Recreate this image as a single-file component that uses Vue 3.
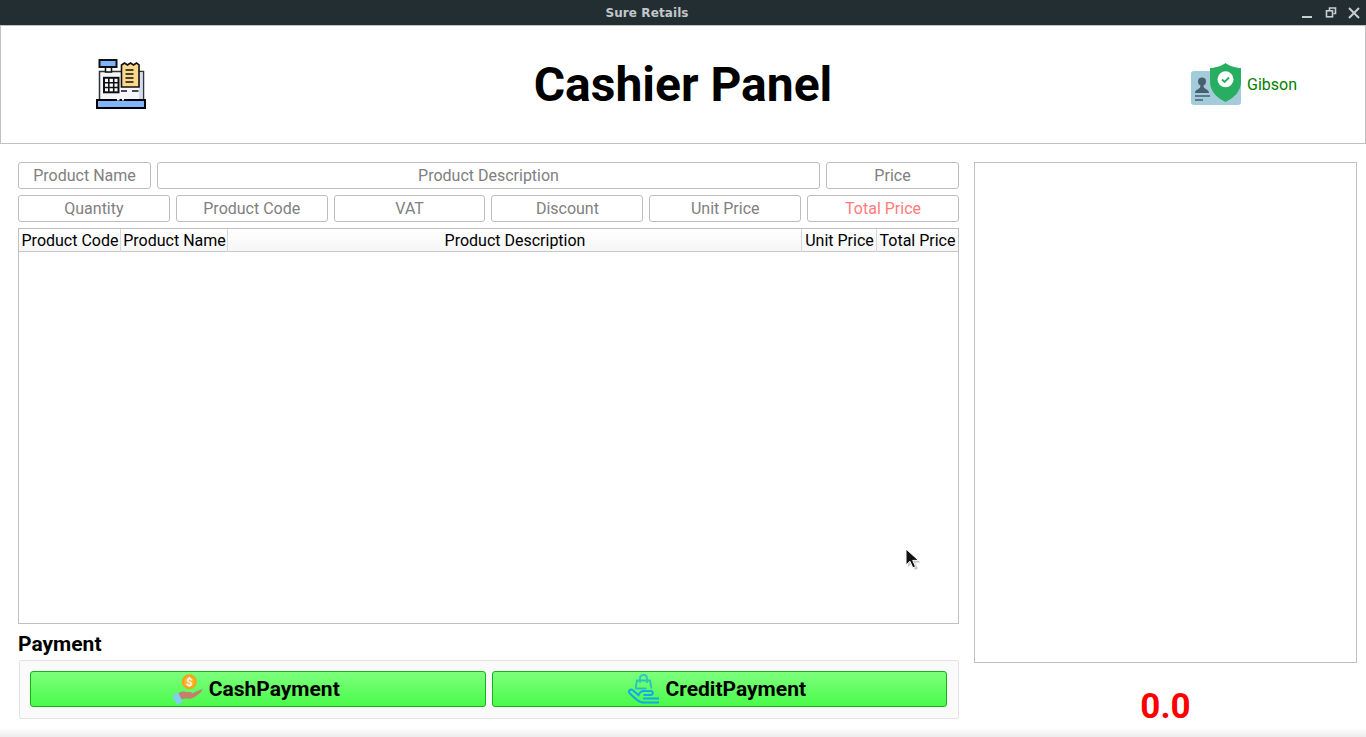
<script setup>
const topFields = ['Product Name', 'Product Description', 'Price']
const bottomFields = ['Quantity', 'Product Code', 'VAT', 'Discount', 'Unit Price', 'Total Price']
const columns = ['Product Code', 'Product Name', 'Product Description', 'Unit Price', 'Total Price']
</script>

<template>
  <div class="window">
    <div class="titlebar">
      <span class="title">Sure Retails</span>
      <div class="controls">
        <svg width="12" height="12" viewBox="0 0 12 12"><path d="M0 10h10" stroke="#c9cdcf" stroke-width="2" /></svg>
        <svg width="12" height="12" viewBox="0 0 12 12" fill="none" stroke="#c9cdcf" stroke-width="1.6"><path d="M4.5 3V1h6v5.500H8.500" /><rect x="1.500" y="3.800" width="6" height="6" /></svg>
        <svg width="12" height="12" viewBox="0 0 12 12"><path d="M1 1l10 10M11 1L1 11" stroke="#c9cdcf" stroke-width="2" /></svg>
      </div>
    </div>

    <header class="header">
      <div class="logo">
        <svg width="50" height="50" viewBox="0 0 50 50">
          <rect x="3.500" y="12.500" width="44" height="29" fill="#f4f6fc" stroke="#333" stroke-width="1.500" />
          <rect x="43" y="13" width="3.500" height="28" fill="#d3dcf0" />
          <rect x="9.500" y="8" width="6" height="5" fill="#fff" stroke="#111" stroke-width="1.500" />
          <rect x="3.500" y="1" width="17" height="7" fill="#80b4fb" stroke="#111" stroke-width="2" />
          <rect x="8" y="18.800" width="14.500" height="14.500" fill="#fff" stroke="#111" stroke-width="2" />
          <path d="M8 23.700h14.500M8 28.500h14.500M12.800 19v14M17.700 19v14" stroke="#111" stroke-width="1.600" />
          <path d="M25.500 28V6l3-2 3 2 3-2 3 2 3-2 2.500 2v22z" fill="#fcd98a" stroke="#111" stroke-width="1.600" />
          <path d="M29.500 11h8M29.500 15h8M29.500 19h8M29.500 23h8" stroke="#111" stroke-width="1.500" />
          <path d="M25 32h6M36 32h6.500" stroke="#111" stroke-width="1.600" />
          <rect x="1" y="41" width="48" height="8" fill="#80b4fb" stroke="#000" stroke-width="2" />
          <path d="M21 40.500h2.500M26 40.500h2" stroke="#fff" stroke-width="2" />
        </svg>
      </div>
      <h1>Cashier Panel</h1>
      <div class="user">
        <svg width="50" height="42" viewBox="0 0 50 42">
          <rect x="0" y="8" width="50" height="34" rx="3" fill="#a4cbd9" />
          <circle cx="11" cy="18.500" r="4" fill="#46606f" />
          <path d="M11 21c1 0 1.800 1 1.800 3 .2 2 5.200 2.500 5.200 6H4c0-3.500 5-4 5.200-6 0-2 .8-3 1.800-3z" fill="#46606f" />
          <path d="M4 33h15M4 37h8" stroke="#46606f" stroke-width="1.400" />
          <path d="M34.500 0c3 2.500 10 5 15.500 5v14c0 9-7 16-15.500 20C26 35 19 28 19 19V5c5.500 0 12.500-2.500 15.500-5z" fill="#27ae60" />
          <circle cx="34.500" cy="16.300" r="8" fill="#fff" />
          <path d="M31 16.500l2.600 2.500 4.400-4.500" fill="none" stroke="#27ae60" stroke-width="1.800" />
        </svg>
        <span class="username">Gibson</span>
      </div>
    </header>

    <main class="content">
      <section class="left">
        <div class="field-row top">
          <input v-for="f in topFields" :key="f" class="field" :placeholder="f" />
        </div>
        <div class="field-row">
          <input
            v-for="f in bottomFields"
            :key="f"
            class="field"
            :class="{ total: f === 'Total Price' }"
            :placeholder="f"
          />
        </div>

        <div class="table">
          <div class="table-head">
            <div v-for="c in columns" :key="c" class="th">{{ c }}</div>
          </div>
        </div>

        <h2 class="payment-label">Payment</h2>
        <div class="payment-box">
          <button class="pay">
            <svg width="32" height="32" viewBox="0 0 32 32">
              <circle cx="17.300" cy="8.700" r="7.500" fill="#f7a21b" />
              <circle cx="17.300" cy="8.700" r="5.300" fill="#fbb62e" />
              <path d="M6 20.500c3-2.500 6-2.500 9-1.500h4c1 0 1 1.500 0 2l5-2.500c2-1 6-2.500 7-2-2 3-6 6-9 8-3 1.500-6 1.500-8 1l-6 1z" fill="#c47f6d" />
              <path d="M0 22.500l6-3 5 9.500-6 3z" fill="#7ed0ee" />
              <text x="17.300" y="12.500" class="dollar">$</text>
            </svg>
            CashPayment
          </button>
          <button class="pay">
            <svg width="32" height="32" viewBox="0 0 32 32" fill="none">
              <path d="M7.500 15.500l1.500-8h13l1.500 8" stroke="#23c4c4" stroke-width="1.800" />
              <path d="M7.500 15.500h11" stroke="#1fbbd0" stroke-width="1.800" />
              <path d="M12 10V5c0-4 7-4 7 0v5" stroke="#2cc7c0" stroke-width="1.800" />
              <path d="M31 29.500H15c-4 0-7-3-11-7L1.500 20c-1.500-2 1-4.500 3-3l6 5c1.500-3.500 3.500-4.500 6-4h6c3 0 3 4 0 4h-7" stroke="#10a8ee" stroke-width="2" />
              <path d="M15 25.500h16" stroke="#10a8ee" stroke-width="2" />
            </svg>
            CreditPayment
          </button>
        </div>
      </section>

      <aside class="right">
        <div class="preview"></div>
        <div class="amount">0.0</div>
      </aside>
    </main>

    <div class="bottom-edge"></div>

    <svg class="cursor" width="16" height="24" viewBox="0 0 16 24">
      <path d="M3 3v16l4-3.500 3 6.500 3-1.500-3-6h5.500z" fill="#9a9a9a" opacity="0.55" />
      <path d="M1 1v16l4-3.700 2.800 6.500 2.700-1.200-2.800-6.200H13.500z" fill="#111" stroke="#fff" stroke-width="1" />
    </svg>
  </div>
</template>

<style>
html, body {
  margin: 0;
  background: #fff;
}
</style>

<style scoped>
.window {
  position: relative;
  width: 1366px;
  height: 737px;
  overflow: hidden;
  background: #fff;
  font-family: Roboto, sans-serif;
  display: flex;
  flex-direction: column;
}

.titlebar {
  position: relative;
  height: 25px;
  flex: none;
  box-sizing: border-box;
  padding-right: 72px;
  background: #232e33;
  display: flex;
  align-items: center;
  justify-content: center;
}

.title {
  font-family: "DejaVu Sans", sans-serif;
  font-size: 12px;
  font-weight: bold;
  letter-spacing: 0.1px;
  color: #c3c7c9;
}

.controls {
  position: absolute;
  right: 6px;
  top: 7px;
  display: flex;
  gap: 11px;
}

.header {
  height: 119px;
  flex: none;
  box-sizing: border-box;
  border: 1px solid #c0c0c0;
  display: grid;
  grid-template-columns: 1fr auto 1fr;
  align-items: center;
}

.logo {
  padding-left: 95px;
  display: flex;
}

.logo svg,
.user svg {
  margin-bottom: 2px;
}

h1 {
  margin: 0;
  font-size: 48px;
  font-weight: 700;
  color: #000;
}

.user {
  justify-self: end;
  padding-right: 68px;
  display: flex;
  align-items: center;
  gap: 6px;
}

.username {
  font-size: 16px;
  color: #008000;
}

.content {
  flex: 1;
  display: flex;
  gap: 15px;
  padding: 18px 9px 0 18px;
}

.left {
  width: 941px;
  display: flex;
  flex-direction: column;
}

.field-row {
  display: grid;
  grid-template-columns: repeat(6, 1fr);
  gap: 6px;
  margin-bottom: 6px;
}

.field-row.top {
  grid-template-columns: 133px 1fr 133px;
}

.field {
  min-width: 0;
  width: 100%;
  height: 27px;
  box-sizing: border-box;
  padding: 0;
  border: 1px solid #bdbdbd;
  border-radius: 3px;
  background: #fff;
  text-align: center;
  font-family: Roboto, sans-serif;
  font-size: 16px;
  outline: none;
}

.field::placeholder {
  color: #808080;
  opacity: 1;
}

.field.total::placeholder {
  color: #ff7b7b;
}

.table {
  height: 396px;
  box-sizing: border-box;
  border: 1px solid #bfbfbf;
}

.table-head {
  height: 23px;
  box-sizing: border-box;
  display: grid;
  grid-template-columns: 102px 107px 1fr 75px 81px;
  border-bottom: 1px solid #c8c8c8;
  background: linear-gradient(#fff, #f6f6f6);
}

.th {
  padding-left: 1px;
  font-size: 16px;
  line-height: 23px;
  text-align: center;
  color: #000;
  border-right: 1px solid #d8d8d8;
  white-space: nowrap;
}

.th:last-child {
  padding-left: 0;
  border-right: none;
}

.payment-label {
  margin: 0;
  height: 36px;
  line-height: 40px;
  font-size: 21px;
  font-weight: 700;
  color: #000;
}

.payment-box {
  margin-left: 1px;
  height: 59px;
  box-sizing: border-box;
  padding: 10px 11px 10px 10px;
  display: flex;
  gap: 6px;
  background: #fafafa;
  border: 1px solid #e2e2e2;
  border-radius: 2px;
}

.pay {
  flex: 1 1 0;
  height: 36px;
  padding: 0 4px 0 0;
  display: flex;
  align-items: center;
  justify-content: center;
  gap: 5px;
  border: 1px solid #16b316;
  border-radius: 3px;
  background: linear-gradient(#7dff7d, #4afa4a);
  font-family: Roboto, sans-serif;
  font-size: 21px;
  font-weight: 700;
  color: #000;
}

.dollar {
  font-family: Roboto, sans-serif;
  font-size: 11px;
  font-weight: 700;
  fill: #fff;
  text-anchor: middle;
}

.right {
  width: 383px;
  display: flex;
  flex-direction: column;
}

.preview {
  height: 501px;
  box-sizing: border-box;
  border: 1px solid #c0c0c0;
}

.amount {
  margin-top: 24px;
  text-align: center;
  font-size: 35px;
  line-height: 40px;
  font-weight: 700;
  color: #ff0000;
}

.bottom-edge {
  position: absolute;
  left: 0;
  right: 0;
  bottom: 0;
  height: 9px;
  background: linear-gradient(rgba(238, 238, 238, 0), #ececec);
}

.cursor {
  position: absolute;
  left: 905px;
  top: 548px;
}
</style>
